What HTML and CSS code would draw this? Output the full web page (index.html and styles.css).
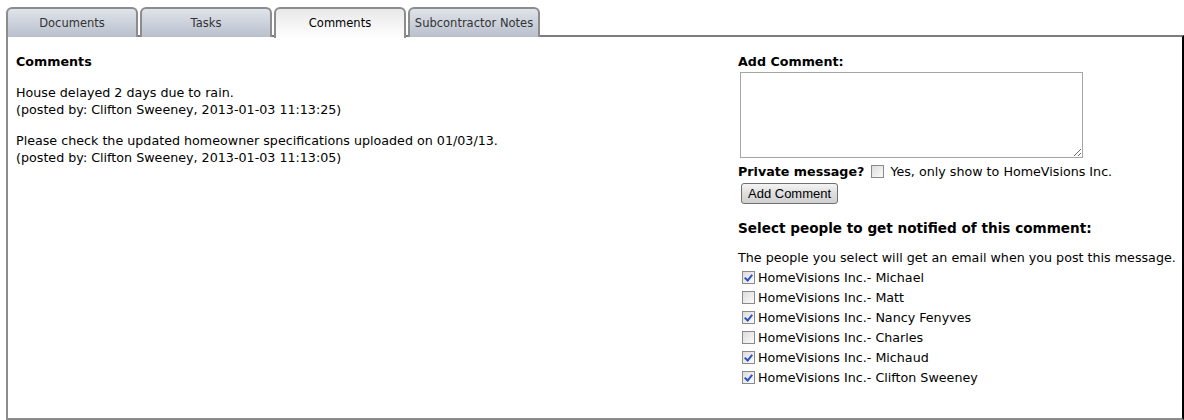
FILE: index.html
```html
<!DOCTYPE html>
<html>
<head>
<meta charset="utf-8">
<link rel="stylesheet" href="styles.css">
</head>
<body>
<div class="page">
  <div class="tabs">
    <div class="tab">Documents</div>
    <div class="tab">Tasks</div>
    <div class="tab active">Comments</div>
    <div class="tab">Subcontractor Notes</div>
  </div>
  <div class="panel">
    <div class="col-left">
      <h3 class="title">Comments</h3>
      <p class="comment">House delayed 2 days due to rain.<br>(posted by: Clifton Sweeney, 2013-01-03 11:13:25)</p>
      <p class="comment">Please check the updated homeowner specifications uploaded on 01/03/13.<br>(posted by: Clifton Sweeney, 2013-01-03 11:13:05)</p>
    </div>
    <div class="col-right">
      <div class="label">Add Comment:</div>
      <textarea class="box"></textarea>
      <div class="private"><b>Private message?</b><input type="checkbox" class="cb"><span>Yes, only show to HomeVisions Inc.</span></div>
      <button class="btn">Add Comment</button>
      <h2 class="notify">Select people to get notified of this comment:</h2>
      <div class="hint">The people you select will get an email when you post this message.</div>
      <ul class="people">
        <li><input type="checkbox" class="cb" checked>HomeVisions Inc.- Michael</li>
        <li><input type="checkbox" class="cb">HomeVisions Inc.- Matt</li>
        <li><input type="checkbox" class="cb" checked>HomeVisions Inc.- Nancy Fenyves</li>
        <li><input type="checkbox" class="cb">HomeVisions Inc.- Charles</li>
        <li><input type="checkbox" class="cb" checked>HomeVisions Inc.- Michaud</li>
        <li><input type="checkbox" class="cb" checked>HomeVisions Inc.- Clifton Sweeney</li>
      </ul>
    </div>
  </div>
</div>
</body>
</html>
```
FILE: styles.css
```css
html, body {
  margin: 0;
  padding: 0;
  background: #fff;
}
.page {
  font-family: "DejaVu Sans", Verdana, sans-serif;
  font-size: 12.7px;
  color: #000;
  padding: 7px 0 0 6px;
  width: 1178px;
}
.tabs {
  display: flex;
  gap: 2px;
  height: 29px;
  position: relative;
  z-index: 1;
}
.tab {
  width: 128px;
  height: 28px;
  border: 2px solid #8c8c8c;
  border-bottom: none;
  border-radius: 6px 6px 0 0;
  background: linear-gradient(#dfe3ea, #b9c0cc);
  color: #333;
  font-family: "DejaVu Sans", Tahoma, sans-serif;
  font-size: 11.5px;
  text-align: center;
  line-height: 28px;
}
.tab.active {
  background: linear-gradient(#e8e8e8, #ffffff);
  height: 29px;
  color: #000;
}
.panel {
  display: flex;
  border-top: 2px solid #7d7d7d;
  border-left: 2px solid #8c8c8c;
  border-bottom: 2px solid #8c8c8c;
  border-right: 2px solid #000;
  margin-top: -1px;
  height: 385px;
  box-sizing: border-box;
  padding: 13px 0 0 8px;
}
.col-left {
  flex: 1;
}
.col-right {
  width: 444px;
}
.title {
  font-size: 12.7px;
  font-weight: bold;
  margin: 3px 0 14px;
  line-height: 17px;
}
.comment {
  margin: 0 0 14px;
  line-height: 17px;
}
.label {
  font-weight: bold;
  line-height: 17px;
  margin-top: 3px;
}
.box {
  display: block;
  width: 343px;
  height: 86px;
  box-sizing: border-box;
  margin: 2px 0 0 2px;
  border: 1px solid #a5a5a5;
  resize: both;
  padding: 2px;
}
.private {
  margin-top: 5px;
  line-height: 17px;
  display: flex;
  align-items: center;
}
.cb {
  appearance: none;
  -webkit-appearance: none;
  width: 13px;
  height: 13px;
  margin: 0 3px 0 4px;
  border: 1px solid #8a8a8a;
  background: linear-gradient(135deg, #dcdcdc, #fbfbfb);
  box-sizing: border-box;
  position: relative;
  flex: none;
}
.cb:checked::after {
  content: "";
  position: absolute;
  left: 3px;
  top: 1px;
  width: 3px;
  height: 6px;
  border: solid #2a52c6;
  border-width: 0 2px 2px 0;
  transform: rotate(40deg);
}
.private .cb {
  margin: 0 6px 0 7px;
}
.btn {
  display: block;
  margin: 3px 0 0 3px;
  height: 21px;
  padding: 0 6px;
  font-family: "Liberation Sans", Arial, sans-serif;
  font-size: 13px;
  color: #000;
  border: 1px solid #707070;
  border-radius: 3px;
  background: linear-gradient(#f4f4f4, #dedede 50%, #d0d0d0);
}
.notify {
  font-size: 13.6px;
  font-weight: bold;
  margin: 15px 0 0;
  line-height: 18px;
}
.hint {
  margin-top: 12px;
  line-height: 17px;
}
.people {
  list-style: none;
  margin: 1px 0 0;
  padding: 0;
}
.people li {
  display: flex;
  align-items: center;
  height: 20px;
}
.people .cb {
  margin: 0 3px 0 4px;
}
```
